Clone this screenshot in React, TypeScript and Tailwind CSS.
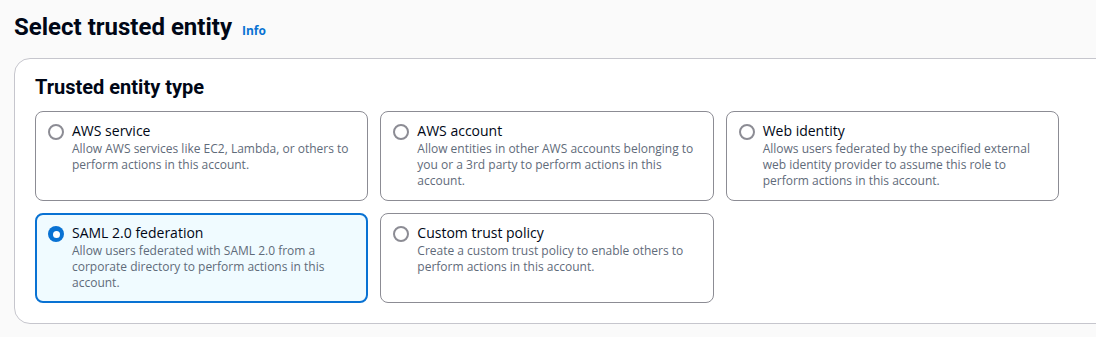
import React from 'react';

interface EntityOption {
  id: string;
  title: string;
  description: string;
}

const options: EntityOption[] = [
  { id: 'aws-service', title: 'AWS service', description: 'Allow AWS services like EC2, Lambda, or others to perform actions in this account.' },
  { id: 'aws-account', title: 'AWS account', description: 'Allow entities in other AWS accounts belonging to you or a 3rd party to perform actions in this account.' },
  { id: 'web-identity', title: 'Web identity', description: 'Allows users federated by the specified external web identity provider to assume this role to perform actions in this account.' },
  { id: 'saml', title: 'SAML 2.0 federation', description: 'Allow users federated with SAML 2.0 from a corporate directory to perform actions in this account.' },
  { id: 'custom', title: 'Custom trust policy', description: 'Create a custom trust policy to enable others to perform actions in this account.' },
];

const Radio: React.FC<{ checked: boolean }> = ({ checked }) =>
  checked ? (
    <span className="mt-[3px] flex h-[16px] w-[16px] shrink-0 items-center justify-center rounded-full bg-[#0972d3]">
      <span className="h-[7px] w-[7px] rounded-full bg-white" />
    </span>
  ) : (
    <span className="mt-[3px] h-[16px] w-[16px] shrink-0 rounded-full border-2 border-[#8c8c94] bg-white" />
  );

const Tile: React.FC<{ option: EntityOption; selected: boolean; onSelect: () => void }> = ({ option, selected, onSelect }) => (
  <button
    onClick={onSelect}
    className={
      selected
        ? 'flex gap-[8px] rounded-lg border-2 border-[#0972d3] bg-[#f0fbff] pl-[11px] pr-[11px] pt-[8px] pb-[10px] text-left'
        : 'flex gap-[8px] rounded-lg border border-[#8c8c94] bg-white pl-[12px] pr-[12px] pt-[9px] pb-[11px] text-left'
    }
  >
    <Radio checked={selected} />
    <span className="flex flex-col">
      <span className="text-[14px] leading-[20px] text-[#000716]">{option.title}</span>
      <span className="text-[12px] leading-[16px] text-[#5f6b7a]">{option.description}</span>
    </span>
  </button>
);

export default function App() {
  const [selected, setSelected] = React.useState('saml');

  return (
    <div className="h-[337px] w-[1096px] overflow-hidden bg-[#fafafa] pl-[14px] pt-[12px]" style={{ fontFamily: '"Open Sans", "Noto Sans", Arial, sans-serif' }}>
      <div className="flex items-baseline gap-[10px]">
        <h1 className="font-['Roboto',sans-serif] text-[24px] font-bold leading-[30px] text-[#000716]">Select trusted entity</h1>
        <a className="text-[12px] font-bold text-[#0972d3]">Info</a>
      </div>
      <div className="mt-[16px] w-[1110px] rounded-2xl border border-[#c6c6cd] bg-white px-[20px] pt-[16px] pb-[20px]">
        <h2 className="font-['Roboto',sans-serif] text-[20px] font-bold leading-[24px] text-[#000716]">Trusted entity type</h2>
        <div className="mt-[12px] grid w-[1024px] grid-cols-3 gap-x-[12px] gap-y-[12px]">
          {options.map((o) => (
            <Tile key={o.id} option={o} selected={selected === o.id} onSelect={() => setSelected(o.id)} />
          ))}
        </div>
      </div>
    </div>
  );
}
